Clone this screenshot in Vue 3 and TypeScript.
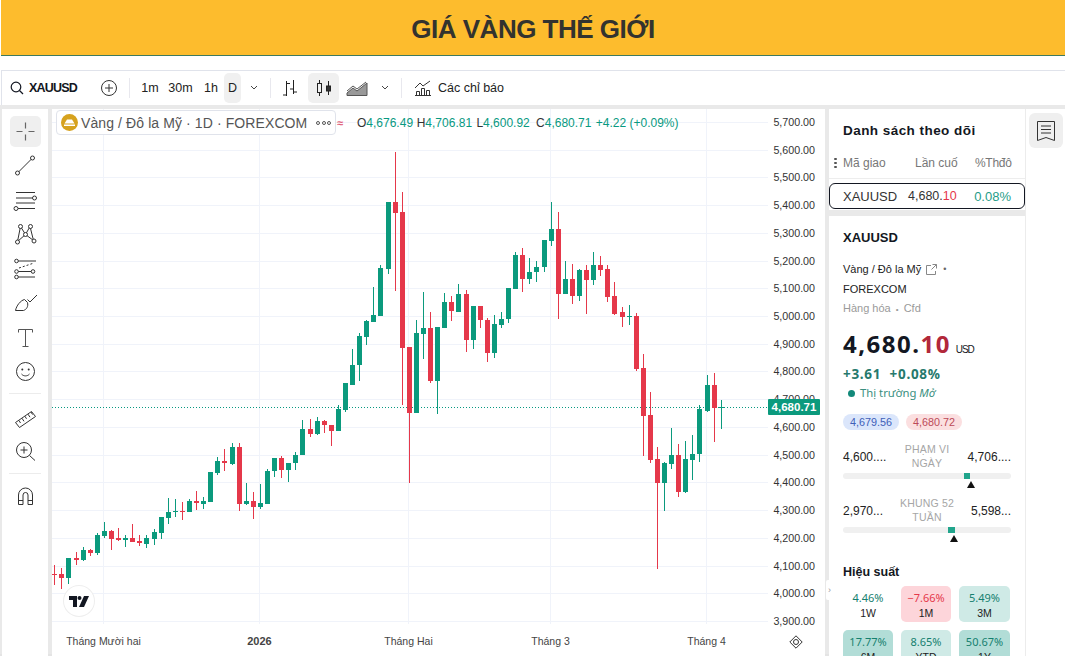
<script setup lang="ts">
interface Candle {
  x: number;
  top: number;
  bottom: number;
  high: number;
  low: number;
  up: boolean;
}

type Row = [number, number, number, number, number];

// rows were read off 3x crops: bodyTop, bodyBottom, wickTop, wickBottom, up
const fromCrop = (originY: number, rows: Row[]) =>
  rows.map((r) => ({
    top: originY + r[0] / 3,
    bottom: originY + r[1] / 3,
    high: originY + r[2] / 3,
    low: originY + r[3] / 3,
    up: r[4] === 1,
  }));

const rawCandles = [
  ...fromCrop(420, [
    [462, 465, 436, 494, 0], [462, 474, 444, 508, 0], [413, 475, 413, 492, 1], [414, 421, 396, 434, 0],
    [389, 421, 382, 422, 1], [390, 398, 386, 407, 0], [346, 398, 338, 406, 1], [334, 348, 306, 354, 1],
    [333, 356, 330, 389, 0], [354, 360, 325, 364, 0], [355, 359, 344, 381, 1], [355, 365, 312, 367, 0],
    [363, 370, 344, 378, 0], [355, 371, 346, 384, 1], [336, 356, 328, 376, 1], [292, 338, 290, 356, 1],
    [276, 295, 233, 312, 1], [273, 277, 236, 290, 1], [273, 275, 247, 299, 0], [244, 275, 238, 276, 1],
    [244, 250, 214, 270, 0], [244, 251, 232, 268, 1], [157, 245, 155, 246, 1], [122, 158, 110, 164, 1],
    [122, 128, 88, 152, 0], [82, 131, 68, 136, 1], [82, 252, 70, 272, 0], [243, 252, 190, 256, 1],
    [244, 262, 216, 298, 0], [249, 262, 192, 268, 1], [152, 252, 148, 252, 1], [114, 154, 114, 170, 1],
    [114, 150, 108, 174, 0], [128, 150, 128, 187, 1], [104, 130, 96, 150, 1],
  ]),
  ...fromCrop(140, [
    [868, 945, 840, 946, 1], [867, 881, 838, 892, 0], [843, 882, 830, 884, 1], [843, 856, 840, 880, 0],
    [855, 873, 855, 918, 0], [808, 873, 795, 873, 1], [730, 811, 730, 815, 1], [674, 734, 627, 734, 1],
    [587, 676, 580, 722, 1], [543, 590, 540, 616, 1], [525, 546, 440, 546, 1], [384, 528, 376, 528, 1],
    [187, 387, 185, 403, 1], [187, 219, 36, 452, 0], [217, 624, 157, 796, 0], [622, 819, 622, 1029, 0],
    [579, 819, 540, 819, 1], [563, 581, 457, 657, 1], [563, 723, 515, 730, 0], [562, 723, 560, 822, 1],
    [485, 565, 460, 565, 1], [485, 514, 468, 544, 0], [463, 515, 432, 515, 1], [463, 600, 450, 636, 0],
    [497, 600, 497, 628, 1], [498, 540, 498, 564, 0], [539, 638, 535, 665, 0], [552, 638, 524, 654, 1],
  ]),
  ...fromCrop(190, [
    [387, 404, 365, 414, 1], [295, 388, 295, 400, 1], [195, 296, 185, 296, 1], [195, 267, 175, 305, 0],
    [247, 267, 203, 283, 1], [230, 247, 213, 275, 1], [151, 231, 149, 245, 1], [116, 153, 35, 167, 1],
    [117, 313, 67, 386, 0], [267, 313, 213, 313, 1], [267, 318, 222, 341, 0], [239, 318, 238, 332, 1],
    [240, 269, 224, 372, 0], [224, 270, 186, 286, 1], [225, 240, 197, 258, 0], [237, 321, 226, 337, 0],
    [318, 371, 275, 376, 0], [367, 380, 350, 410, 0], [379, 381, 345, 405, 1], [378, 538, 370, 544, 0],
    [534, 677, 493, 798, 0], [675, 810, 605, 818, 0], [808, 879, 770, 1136, 0], [820, 879, 815, 962, 1],
    [796, 822, 715, 836, 1], [796, 905, 763, 922, 0], [808, 905, 753, 908, 1], [791, 810, 735, 870, 1],
    [658, 793, 645, 816, 1], [585, 662, 555, 665, 1], [585, 655, 550, 755, 0], [651, 654, 630, 716, 1],
  ]),
];

const candles: Candle[] = rawCandles.map((c, i) => ({ ...c, x: Math.round(54.3 + 7.09 * i) }));

const priceLevels = Array.from({ length: 19 }, (_, i) => {
  const price = 5700 - i * 100;
  return {
    y: Math.round(122 + i * 27.72),
    label: price.toLocaleString('en-US', { minimumFractionDigits: 2 }),
  };
});

const timeMarks = [
  { x: 103.5, label: 'Tháng Mười hai', bold: false },
  { x: 259.5, label: '2026', bold: true },
  { x: 408.5, label: 'Tháng Hai', bold: false },
  { x: 550.5, label: 'Tháng 3', bold: false },
  { x: 706.5, label: 'Tháng 4', bold: false },
];

const ohlc = [
  { key: 'O', value: '4,676.49' },
  { key: 'H', value: '4,706.81' },
  { key: 'L', value: '4,600.92' },
  { key: 'C', value: '4,680.71' },
];

const performance = [
  { value: '4.46%', label: '1W', kind: 'plain' },
  { value: '−7.66%', label: '1M', kind: 'loss' },
  { value: '5.49%', label: '3M', kind: 'gain' },
  { value: '17.77%', label: '6M', kind: 'gain-strong' },
  { value: '8.65%', label: 'YTD', kind: 'gain' },
  { value: '50.67%', label: '1Y', kind: 'gain-strong' },
];
</script>

<template>
  <div class="page">
    <header class="banner"><h1>GIÁ VÀNG THẾ GIỚI</h1></header>

    <div class="topbar">
      <div class="symbol-search">
        <svg width="16" height="16" viewBox="0 0 16 16" fill="none" stroke="#131722" stroke-width="1.2">
          <circle cx="7" cy="7" r="4.8" />
          <path d="M10.5 10.5 14 14" />
        </svg>
        <span>XAUUSD</span>
      </div>
      <svg class="add-icon" width="18" height="18" viewBox="0 0 18 18" fill="none" stroke="#333" stroke-width="1">
        <circle cx="9" cy="9" r="7.5" />
        <path d="M9 5v8M5 9h8" />
      </svg>
      <i class="sep sep-a"></i>
      <button class="tf">1m</button>
      <button class="tf">30m</button>
      <button class="tf">1h</button>
      <button class="tf tf-on">D</button>
      <svg class="chev" width="10" height="6" viewBox="0 0 10 6" fill="none" stroke="#444"><path d="m2 1 3 3 3-3" /></svg>
      <i class="sep"></i>
      <svg class="bar-icon" width="18" height="20" viewBox="0 0 18 20" fill="none" stroke="#222">
        <path d="M5.5 3v15M5.5 5.5H9M5.5 17H2M12.5 2v14M12.5 11H9M12.5 14H16" />
      </svg>
      <div class="type-on">
        <svg width="16" height="20" viewBox="0 0 16 20" fill="none" stroke="#222">
          <rect x="1.5" y="5.5" width="4" height="9" />
          <path d="M3.5 2v3.500M3.500 14.500V18M12.500 3v5M12.500 13v4" />
          <rect x="10.500" y="8" width="4" height="5" fill="#333" />
        </svg>
      </div>
      <svg class="area-icon" width="22" height="16" viewBox="0 0 22 16" fill="none" stroke="#555">
        <path d="M1 11 7 6l4 3 9-7" />
        <path d="M1 15.500V13l6-5 4 3 10-8v12.500Z" fill="#999" />
      </svg>
      <svg class="chev chev-type" width="10" height="6" viewBox="0 0 10 6" fill="none" stroke="#444"><path d="m2 1 3 3 3-3" /></svg>
      <i class="sep"></i>
      <svg class="ind-icon" width="18" height="18" viewBox="0 0 18 18" fill="none" stroke="#333">
        <path d="M1 9 6 4l3 3 7-5" />
        <path d="M2.500 16.500v-4h3v4M7.500 16.500v-7h3v7M12.500 16.500v-5h3v5M1 16.500h16" />
      </svg>
      <span class="ind-label">Các chỉ báo</span>
    </div>

    <div class="workspace">
      <nav class="drawbar">
        <button class="tool tool-on">
          <svg width="31" height="31" viewBox="0 0 31 31" fill="none" stroke="#666" stroke-width="1.2">
            <path d="M15.500 6.500v6M15.500 18.500v6M6.500 15.500h6M18.500 15.500h6" />
          </svg>
        </button>
        <button class="tool">
          <svg width="31" height="31" viewBox="0 0 31 31" fill="none" stroke="#333">
            <path d="m8.500 22 13-13" />
            <circle cx="7.500" cy="23" r="2" fill="#fff" />
            <circle cx="22.500" cy="8" r="2" fill="#fff" />
          </svg>
        </button>
        <button class="tool">
          <svg width="31" height="31" viewBox="0 0 31 31" fill="none" stroke="#333">
            <path d="M6 7.500h19M6 13h17M6 18h19M8 23.500h17" />
            <circle cx="24.500" cy="13" r="2" fill="#fff" />
            <circle cx="6" cy="23.500" r="2" fill="#fff" />
          </svg>
        </button>
        <button class="tool">
          <svg width="31" height="31" viewBox="0 0 31 31" fill="none" stroke="#333">
            <path d="m7.500 22.500 3-15 5 8 4.500-8 3.500 14-8-6-8 7Z" />
            <circle cx="7.500" cy="23" r="2" fill="#fff" />
            <circle cx="10.500" cy="7.500" r="2" fill="#fff" />
            <circle cx="20.500" cy="7.500" r="2" fill="#fff" />
            <circle cx="24" cy="22" r="2" fill="#fff" />
            <circle cx="15.500" cy="15.500" r="2" fill="#fff" />
          </svg>
        </button>
        <button class="tool">
          <svg width="31" height="31" viewBox="0 0 31 31" fill="none" stroke="#333">
            <path d="M8 8h18M8 18.500h16M8 24h17" />
            <path d="m9 15 15-5" stroke-dasharray="2 2" />
            <circle cx="6.500" cy="8" r="1.800" fill="#fff" />
            <circle cx="6.500" cy="18.500" r="1.800" fill="#fff" />
            <circle cx="6.500" cy="24" r="1.800" fill="#fff" />
            <circle cx="23" cy="18.500" r="1.800" fill="#fff" />
          </svg>
        </button>
        <button class="tool">
          <svg width="31" height="31" viewBox="0 0 31 31" fill="none" stroke="#333">
            <path d="M5.500 23.500h8c3-1 5-4 4-8l-3-3c-4 1-8 6-9 11Z" />
            <path d="m17.500 12.500 2.500 2.500 7-7" />
          </svg>
        </button>
        <button class="tool">
          <svg width="31" height="31" viewBox="0 0 31 31" fill="none" stroke="#555">
            <path d="M8.500 10.500v-3h14v3M15.500 7.500v17M12.500 24.500h6" />
          </svg>
        </button>
        <button class="tool">
          <svg width="31" height="31" viewBox="0 0 31 31" fill="none" stroke="#333">
            <circle cx="15.500" cy="15.500" r="9" />
            <circle cx="12.300" cy="13.500" r="1" fill="#333" stroke="none" />
            <circle cx="18.700" cy="13.500" r="1" fill="#333" stroke="none" />
            <path d="M11.500 18c2 2.500 6 2.500 8 0" />
          </svg>
        </button>
        <i class="tool-sep"></i>
        <button class="tool">
          <svg width="31" height="31" viewBox="0 0 31 31" fill="none" stroke="#333">
            <path d="m5.500 21.500 16-11 4 5-16 11Z" />
            <path d="m9 19.500 1.500 2.500M12 17.300l2 3M15 15.300l1.500 2.500M18 13.200l2 3M21 11l1.500 2.500" />
          </svg>
        </button>
        <button class="tool">
          <svg width="31" height="31" viewBox="0 0 31 31" fill="none" stroke="#333">
            <circle cx="14" cy="14" r="7.500" />
            <path d="M14 10.500v7M10.500 14h7M19.500 19.500l5.500 5" />
          </svg>
        </button>
        <i class="tool-sep"></i>
        <button class="tool">
          <svg width="31" height="31" viewBox="0 0 31 31" fill="none" stroke="#333">
            <path d="M8.500 23.500V14a7 7 0 0 1 14 0v9.500h-4.500V14a2.500 2.500 0 0 0-5 0v9.500Z" />
            <path d="M8.500 19.500H13M18 19.500h4.500" />
          </svg>
        </button>
      </nav>

      <section class="chart">
        <svg class="plot" viewBox="52 109 773 545" width="773" height="545">
          <g stroke="#f0f3fa">
            <line v-for="p in priceLevels" :key="p.label" x1="52" x2="768" :y1="p.y + 0.5" :y2="p.y + 0.5" />
            <line v-for="t in timeMarks" :key="t.x" :x1="t.x" :x2="t.x" y1="109" y2="624" />
          </g>
          <line x1="52" x2="768" y1="407.500" y2="407.500" stroke="#089981" stroke-dasharray="1 2" />
          <g v-for="(c, i) in candles" :key="i" :fill="c.up ? '#0b9a7d' : '#e5384a'" shape-rendering="crispEdges">
            <rect :x="c.x" :y="c.high" width="1" :height="c.low - c.high" />
            <rect :x="c.x - 2" :y="c.top" width="5" :height="Math.max(c.bottom - c.top, 1)" />
          </g>
          <text v-for="p in priceLevels" :key="p.label" class="price-tick" x="815" :y="p.y + 4" text-anchor="end">{{ p.label }}</text>
          <text
            v-for="t in timeMarks"
            :key="t.label"
            class="time-tick"
            :class="{ 'time-strong': t.bold }"
            :x="t.x"
            y="645"
            text-anchor="middle"
          >{{ t.label }}</text>
        </svg>

        <div class="legend">
          <div class="legend-box">
            <svg width="17" height="17" viewBox="0 0 17 17">
              <circle cx="8.500" cy="8.500" r="8.500" fill="#d6a21e" />
              <path d="M3.500 9.500 6 5.500h5l2.500 4Z" fill="#fff" />
              <rect x="3" y="10.500" width="11" height="1.500" fill="#fff" />
            </svg>
            <span class="legend-title">Vàng / Đô la Mỹ · 1D · FOREXCOM</span>
            <span class="legend-more"><i></i><i></i><i></i></span>
          </div>
          <span class="legend-approx">≈</span>
          <span v-for="o in ohlc" :key="o.key" class="legend-ohlc">{{ o.key }}<b>{{ o.value }}</b></span>
          <span class="legend-change">+4.22 (+0.09%)</span>
        </div>

        <div class="last-price">4,680.71</div>

        <div class="tv-logo">
          <svg width="20" height="11" viewBox="0 0 20 11" fill="#131722">
            <path d="M0 0h8v11H4V4H0Z" />
            <circle cx="10.500" cy="2" r="2" />
            <path d="M15 0h5l-5 11h-5Z" />
          </svg>
        </div>

        <svg class="reset-icon" width="14" height="14" viewBox="0 0 14 14" fill="none" stroke="#333">
          <path d="M7 .8 13.200 7 7 13.200.8 7Z" />
          <circle cx="7" cy="7" r="2.500" />
        </svg>
      </section>

      <aside class="side">
        <div class="watchlist">
          <h2>Danh sách theo dõi</h2>
          <div class="wl-head">
            <span class="wl-dots"><i></i><i></i><i></i></span>
            <span class="wl-sym">Mã giao</span>
            <span class="wl-last">Lần cuố</span>
            <span class="wl-chg">%Thđô</span>
          </div>
          <div class="wl-row">
            <span class="wl-name">XAUUSD</span>
            <span class="wl-price">4,680.<em>10</em></span>
            <span class="wl-pct">0.08%</span>
          </div>
        </div>

        <div class="details">
          <h3>XAUUSD</h3>
          <div class="det-name">
            Vàng / Đô la Mỹ
            <svg width="13" height="13" viewBox="0 0 13 13" fill="none" stroke="#888">
              <path d="M6 2.500H1.500v9h9V8M7.500 1.500h4v4M11.500 1.500l-5 5" />
            </svg>
            <span class="det-bullet">•</span>
          </div>
          <div class="det-venue">FOREXCOM</div>
          <div class="det-kind">Hàng hóa <span>•</span> Cfd</div>

          <div class="det-price">4,680.<em>10</em> <small>USD</small></div>
          <div class="det-change">+3.61&nbsp; +0.08%</div>
          <div class="det-market"><i></i>Thị trường <em>Mở</em></div>

          <div class="pills">
            <span class="pill pill-bid">4,679.56</span>
            <span class="pill pill-ask">4,680.72</span>
          </div>

          <div class="range">
            <div class="range-top">
              <span>4,600....</span>
              <label>PHẠM VI<br />NGÀY</label>
              <span>4,706....</span>
            </div>
            <div class="track">
              <i class="fill fill-day"></i>
              <i class="arrow arrow-day"></i>
            </div>
          </div>
          <div class="range">
            <div class="range-top">
              <span>2,970...</span>
              <label>KHUNG 52<br />TUẦN</label>
              <span>5,598...</span>
            </div>
            <div class="track">
              <i class="fill fill-year"></i>
              <i class="arrow arrow-year"></i>
            </div>
          </div>

          <h4>Hiệu suất</h4>
          <div class="perf">
            <div v-for="p in performance" :key="p.label" class="perf-tile" :class="p.kind">
              <strong>{{ p.value }}</strong>
              <span>{{ p.label }}</span>
            </div>
          </div>
        </div>
        <div class="collapse">›</div>
      </aside>

      <div class="rail">
        <button class="rail-btn">
          <svg width="20" height="22" viewBox="0 0 20 22" fill="none" stroke="#333">
            <path d="M1.500 1.500h17v19L10 17.500l-8.500 3Z" />
            <path d="M5 6h10M5 9.500h10M5 13h10" />
          </svg>
        </button>
      </div>
    </div>
  </div>
</template>

<style scoped>
.page {
  width: 1065px;
  height: 656px;
  overflow: hidden;
  background: #fff;
  font-family: "Liberation Sans", Arial, sans-serif;
  color: #131722;
  display: flex;
  flex-direction: column;
}

.banner {
  flex: none;
  background: #fdbc2d;
  border-bottom: 1px solid #3f7a5e;
  margin-left: 1px;
  padding-top: 3px;
  box-sizing: content-box;
  height: 52px;
  display: flex;
  align-items: center;
  justify-content: center;
}

.banner h1 {
  margin: 0;
  font-size: 26px;
  font-weight: 700;
  letter-spacing: -0.5px;
  color: #33332f;
}

.topbar {
  flex: none;
  height: 34px;
  margin-top: 14px;
  margin-left: 1px;
  border-top: 1px solid #e0e3eb;
  border-left: 1px solid #e0e3eb;
  display: flex;
  align-items: center;
}

.symbol-search {
  display: flex;
  align-items: center;
  gap: 4px;
  margin-left: 7px;
  font-size: 12.500px;
  font-weight: 700;
  letter-spacing: -0.800px;
  width: 90px;
}

.add-icon { margin-left: 1px; }

.sep {
  width: 1px;
  height: 20px;
  background: #e8e8ee;
  margin: 0 6px 0 11px;
}

.tf {
  border: 0;
  background: none;
  padding: 0;
  font: 12.500px "Liberation Sans", Arial, sans-serif;
  color: #222;
  height: 30px;
  width: 28px;
  border-radius: 5px;
}

.tf:nth-of-type(2) { width: 33px; }
.tf:nth-of-type(3) { width: 26px; margin-left: 1px; }
.tf-on { width: 17px; background: #f0f0f0; margin-right: 8px; }

.chev-type { margin-left: 12px; }

.bar-icon { margin-left: 4px; }

.type-on {
  width: 31px;
  height: 30px;
  margin-left: 9px;
  background: #f0f0f0;
  border-radius: 5px;
  display: flex;
  align-items: center;
  justify-content: center;
}

.area-icon { margin-left: 7px; }

.ind-icon { margin-left: 6px; }

.ind-label {
  margin-left: 6px;
  font-size: 12.500px;
  color: #222;
}

.workspace {
  flex: none;
  height: 551px;
  background: #e9e9e9;
  display: grid;
  grid-template-columns: 51px 773px 196px 1fr;
  column-gap: 0;
  padding: 4px 0 0 1px;
  position: relative;
  border-bottom: 2px solid #e4e4e4;
  box-sizing: border-box;
}

.drawbar {
  background: #fff;
  margin-left: 1px;
  margin-right: 4px;
  padding-top: 7px;
  display: flex;
  flex-direction: column;
  align-items: center;
  gap: 3.300px;
}

.tool {
  width: 31px;
  height: 31px;
  padding: 0;
  border: 0;
  background: none;
  border-radius: 5px;
  flex: none;
  display: block;
}

.tool svg { display: block; }

.tool-on { background: #efefef; }

.tool-sep {
  width: 32px;
  height: 1px;
  background: #ececec;
  margin: 3px 0 3.800px;
  flex: none;
}

.chart {
  position: relative;
  background: #fff;
  min-width: 0;
}

.plot {
  display: block;
  font-family: "Liberation Sans", Arial, sans-serif;
}

.price-tick {
  font-size: 10.700px;
  fill: #333;
}

.time-tick {
  font-size: 10.500px;
  fill: #444;
}

.time-strong {
  font-size: 11px;
  font-weight: 700;
}

.legend {
  position: absolute;
  left: 4px;
  top: 1px;
  display: flex;
  align-items: center;
  font-size: 12px;
  white-space: nowrap;
}

.legend-box {
  height: 25px;
  width: 280px;
  box-sizing: border-box;
  background: #fff;
  border: 1px solid #e0e3eb;
  border-radius: 4px;
  display: flex;
  align-items: center;
  padding-left: 4px;
}

.legend-title {
  margin-left: 3px;
  font-size: 14px;
  letter-spacing: 0.100px;
  color: #555;
}

.legend-more {
  display: flex;
  gap: 1.500px;
  margin-left: 9px;
}

.legend-more i {
  width: 4px;
  height: 4px;
  box-sizing: border-box;
  border: 1px solid #555;
  border-radius: 50%;
}

.legend-approx {
  color: #e0607a;
  font-weight: 700;
  font-size: 11px;
  width: 21px;
  padding-left: 1px;
  box-sizing: border-box;
}

.legend-ohlc {
  color: #333;
  width: 59.700px;
}

.legend-ohlc b {
  font-weight: 400;
  color: #089981;
}

.legend-change { color: #089981; margin-left: 0; }

.last-price {
  position: absolute;
  left: 716px;
  top: 290px;
  width: 52px;
  height: 16px;
  background: #0b9a7d;
  color: #fff;
  font-size: 11.500px;
  font-weight: 700;
  line-height: 16px;
  text-align: center;
  border-radius: 1px;
}

.tv-logo {
  position: absolute;
  left: 12px;
  top: 477px;
  width: 30px;
  height: 30px;
  border-radius: 50%;
  background: #fff;
  box-shadow: 0 0 0 1px #eeeeee;
  display: flex;
  align-items: center;
  justify-content: center;
}

.reset-icon {
  position: absolute;
  left: 737px;
  top: 526px;
}

.side {
  display: flex;
  flex-direction: column;
  gap: 6px;
  margin-left: 4px;
  margin-right: -4px;
  position: relative;
  min-width: 0;
}

.watchlist {
  flex: none;
  height: 101px;
  background: #fff;
  box-sizing: border-box;
  padding-top: 14px;
}

.watchlist h2 {
  margin: 0 0 0 14px;
  font-size: 13.500px;
  line-height: 16px;
  letter-spacing: 0.450px;
  font-weight: 700;
}

.wl-head {
  display: flex;
  align-items: center;
  height: 24px;
  margin-top: 12px;
  font-size: 12px;
  color: #777;
  border-bottom: 1px solid #ededed;
  padding-bottom: 3px;
  position: relative;
}

.wl-dots {
  display: flex;
  flex-direction: column;
  gap: 1.500px;
  margin-left: 5px;
  width: 9px;
}

.wl-dots i {
  width: 2.500px;
  height: 2.500px;
  border-radius: 50%;
  background: #555;
}

.wl-sym { width: 72px; }
.wl-last { width: 43px; overflow: hidden; white-space: nowrap; }
.wl-chg { margin-left: 17px; letter-spacing: -0.300px; }

.wl-row {
  margin-top: 4px;
  height: 26px;
  box-sizing: border-box;
  border: 1px solid #131722;
  border-radius: 6px;
  display: flex;
  align-items: center;
  font-size: 13px;
  color: #333;
}

.wl-name { margin-left: 13px; width: 65px; }
.wl-price { font-size: 12.500px; }
.wl-price em { color: #e5384a; font-style: normal; }
.wl-pct { margin-left: auto; margin-right: 13px; color: #1f9d88; }

.details {
  flex: 1;
  min-height: 0;
  overflow: hidden;
  background: #fff;
  padding: 14px 14px 0;
  box-sizing: border-box;
}

.details h3 {
  margin: 0;
  font-size: 13px;
  line-height: 15px;
  font-weight: 700;
}

.det-name {
  display: flex;
  align-items: center;
  gap: 4px;
  margin-top: 17px;
  font-size: 11px;
  line-height: 14px;
  color: #222;
}

.det-bullet { color: #666; font-size: 9px; margin-left: 1px; }

.det-venue {
  margin-top: 6px;
  font-size: 11px;
  line-height: 14px;
  color: #222;
}

.det-kind {
  margin-top: 5px;
  font-size: 11px;
  line-height: 14px;
  color: #9a9a9a;
}

.det-kind span { font-size: 8px; margin: 0 2px; }

.det-price {
  margin-top: 11px;
  font-family: "Noto Sans", sans-serif;
  font-size: 24px;
  font-weight: 700;
  line-height: 32px;
  letter-spacing: 1.500px;
  white-space: nowrap;
}

.det-price em { color: #b2283a; font-style: normal; }

.det-price small {
  font-family: "Liberation Sans", sans-serif;
  font-size: 10px;
  font-weight: 400;
  letter-spacing: -1px;
  margin-left: -3px;
}

.det-change {
  font-family: "Noto Sans", sans-serif;
  font-size: 13.500px;
  font-weight: 700;
  line-height: 16px;
  letter-spacing: 0.700px;
  color: #26796d;
}

.det-market {
  display: flex;
  align-items: center;
  font-family: "Noto Sans", sans-serif;
  font-size: 11.300px;
  line-height: 16px;
  color: #3a8f80;
  margin-top: 3px;
  padding-left: 5px;
  white-space: pre;
}

.det-market i {
  width: 7px;
  height: 7px;
  border-radius: 50%;
  background: #13897a;
  margin-right: 5px;
}

.pills {
  display: flex;
  gap: 7px;
  margin-top: 13px;
}

.pill {
  height: 16px;
  line-height: 16px;
  padding: 0 7px;
  border-radius: 8px;
  font-size: 10.800px;
}

.pill-bid { background: #dbe6fb; color: #4060b8; }
.pill-ask { background: #fbdfe0; color: #bc4a58; }

.range { margin-top: 13px; }

.range-top {
  display: flex;
  justify-content: space-between;
  align-items: center;
  font-size: 12px;
  color: #222;
  height: 28px;
}

.range-top label {
  font-size: 10.500px;
  line-height: 14px;
  color: #a6a6a6;
  text-align: center;
  letter-spacing: 0.200px;
  margin-top: -2px;
}

.track {
  position: relative;
  height: 6px;
  margin-top: 2px;
  margin-bottom: 9px;
  background: #f0f0f0;
  border-radius: 3px;
}

.fill {
  position: absolute;
  top: 0;
  height: 6px;
  background: #21a58c;
}

.fill-day { left: 121px; width: 6px; }
.fill-year { left: 105px; width: 7px; }

.arrow {
  position: absolute;
  top: 8px;
  width: 0;
  height: 0;
  border-left: 4.500px solid transparent;
  border-right: 4.500px solid transparent;
  border-bottom: 7px solid #111;
}

.arrow-day { left: 124px; }
.arrow-year { left: 107px; }

.range + .range { margin-top: 18px; }

.details h4 {
  margin: 31px 0 0;
  font-size: 12.500px;
  line-height: 16px;
  font-weight: 700;
}

.perf {
  display: grid;
  grid-template-columns: 50px 50px 51px;
  column-gap: 8px;
  row-gap: 8px;
  margin-top: 6px;
}

.perf-tile {
  height: 36px;
  border-radius: 5px;
  text-align: center;
  box-sizing: border-box;
  padding-top: 5px;
  display: flex;
  flex-direction: column;
  align-items: center;
  gap: 3px;
}

.perf-tile strong {
  font-family: "Noto Sans", sans-serif;
  font-size: 11px;
  font-weight: 400;
  line-height: 13px;
  color: #15806f;
}

.perf-tile span {
  font-size: 10.500px;
  line-height: 12px;
  color: #222;
}

.perf-tile.loss { background: #fdd5da; }
.perf-tile.loss strong { color: #e5384a; }
.perf-tile.gain { background: #cfeae6; }
.perf-tile.gain-strong { background: #b2ddd7; }

.collapse {
  position: absolute;
  left: -3px;
  top: 471px;
  width: 7px;
  height: 20px;
  background: #fff;
  border-radius: 2px;
  color: #999;
  font-size: 9px;
  line-height: 20px;
  text-align: center;
}

.rail {
  background: #fff;
  margin-left: 4px;
  border-left: 1px solid #ececec;
  padding: 4px 0 0 3px;
}

.rail-btn {
  width: 34px;
  height: 35px;
  border: 0;
  padding: 0;
  border-radius: 6px;
  background: #efefef;
  display: flex;
  align-items: center;
  justify-content: center;
}
</style>
